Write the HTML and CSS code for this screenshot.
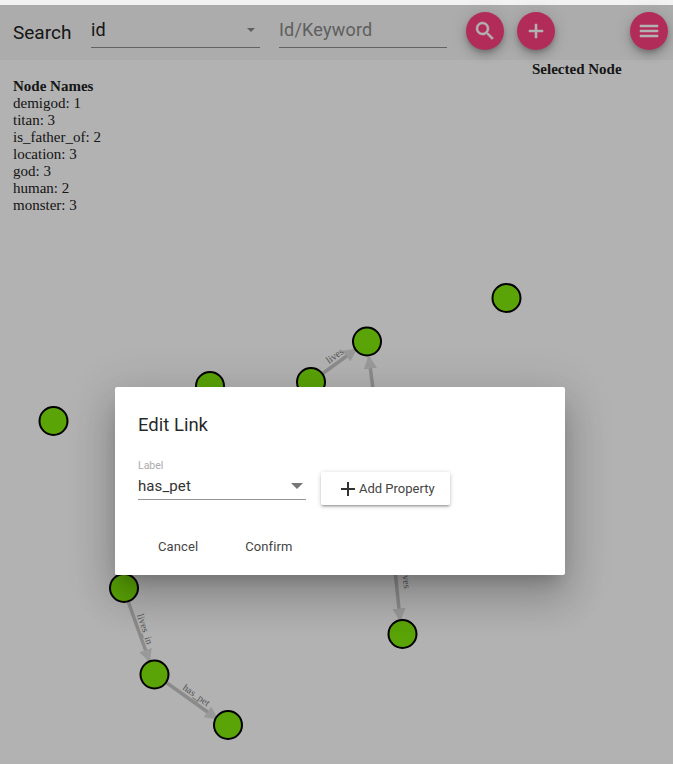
FILE: index.html
```html
<!DOCTYPE html>
<html lang="en">
<head>
<meta charset="utf-8">
<title>Graph</title>
<link rel="stylesheet" href="styles.css">
</head>
<body>
<div class="strip"></div>
<header class="toolbar">
  <span class="search-title">Search</span>
  <div class="field field-select"><span>id</span><i class="caret"></i></div>
  <div class="field field-input"><span>Id/Keyword</span></div>
  <button class="fab fab-search"><svg viewBox="0 0 24 24" width="24" height="24"><path d="M15.5 14h-.79l-.28-.27A6.47 6.47 0 0 0 16 9.5 6.5 6.5 0 1 0 9.5 16c1.61 0 3.09-.59 4.23-1.57l.27.28v.79l5 4.99L20.49 19l-4.99-5zm-6 0C7.01 14 5 11.99 5 9.5S7.01 5 9.5 5 14 7.01 14 9.5 11.99 14 9.5 14z"/></svg></button>
  <button class="fab fab-add"><svg viewBox="0 0 24 24" width="24" height="24"><path d="M19 13h-6v6h-2v-6H5v-2h6V5h2v6h6v2z"/></svg></button>
  <button class="fab fab-menu"><svg viewBox="0 0 24 24" width="24" height="24"><path d="M3 18h18v-2H3v2zm0-5h18v-2H3v2zm0-7v2h18V6H3z"/></svg></button>
</header>
<main class="content">
  <section class="names">
    <div class="names-title">Node Names</div>
    <div>demigod: 1</div>
    <div>titan: 3</div>
    <div>is_father_of: 2</div>
    <div>location: 3</div>
    <div>god: 3</div>
    <div>human: 2</div>
    <div>monster: 3</div>
  </section>
  <section class="selected">Selected Node</section>
</main>
<svg class="graph" width="673" height="764" viewBox="0 0 673 764">
  <defs>
    <marker id="arrow" viewBox="0 0 10 10" refX="8" refY="5" markerWidth="3.8" markerHeight="3.8" markerUnits="strokeWidth" orient="auto"><path class="arrow-head" d="M0 0L10 5L0 10z"/></marker>
  </defs>
  <g class="edges">
    <line x1="311" y1="382" x2="355" y2="350" marker-end="url(#arrow)"/>
    <line x1="377" y1="420" x2="369" y2="358" marker-end="url(#arrow)"/>
    <line x1="394" y1="560" x2="400" y2="619" marker-end="url(#arrow)"/>
    <line x1="128" y1="601" x2="149" y2="660" marker-end="url(#arrow)"/>
    <line x1="167" y1="683" x2="216" y2="718" marker-end="url(#arrow)"/>
  </g>
  <g class="labels">
    <text transform="translate(329 364) rotate(-36)">lives</text>
    <text transform="translate(371 407) rotate(-83)">lives</text>
    <text transform="translate(402 570) rotate(84)">lives</text>
    <text transform="translate(137 615) rotate(72)">lives_in</text>
    <text transform="translate(182 689) rotate(35)">has_pet</text>
  </g>
  <g class="nodes">
    <circle cx="506.500" cy="298" r="14"/>
    <circle cx="367" cy="341.500" r="14"/>
    <circle cx="311" cy="382" r="14"/>
    <circle cx="210" cy="386" r="14"/>
    <circle cx="53.500" cy="421" r="14"/>
    <circle cx="124" cy="588" r="14"/>
    <circle cx="154.500" cy="674.500" r="14"/>
    <circle cx="228" cy="725" r="14"/>
    <circle cx="402.500" cy="634" r="14"/>
  </g>
</svg>
<div class="overlay">
  <div class="dialog">
    <h2 class="dialog-title">Edit Link</h2>
    <div class="dialog-body">
      <div class="label-field">
        <div class="label-caption">Label</div>
        <div class="label-select"><span>has_pet</span><i class="caret caret-dark"></i></div>
      </div>
      <button class="add-prop"><svg viewBox="0 0 24 24" width="24" height="24"><path d="M19 13h-6v6h-2v-6H5v-2h6V5h2v6h6v2z"/></svg><span>Add Property</span></button>
    </div>
    <div class="dialog-actions">
      <button class="text-btn">Cancel</button>
      <button class="text-btn">Confirm</button>
    </div>
  </div>
</div>
</body>
</html>
```
FILE: styles.css
```css
* { box-sizing: border-box; }
html, body { margin: 0; padding: 0; }
body {
  width: 673px;
  height: 764px;
  overflow: hidden;
  background: #fff;
  position: relative;
  font-family: "Liberation Serif", serif;
  color: #222;
}
.strip { height: 5px; background: #f2f2f2; }
.toolbar {
  height: 55px;
  background: #f6f6f6;
  display: flex;
  align-items: flex-start;
  position: relative;
}
.search-title {
  font: 19px/22px Roboto, sans-serif;
  color: #222;
  margin: 17px 0 0 13px;
  width: 78px;
}
.field {
  border-bottom: 1px solid #8d8d8d;
  height: 43px;
  font: 18px/22px Roboto, sans-serif;
  padding-top: 14px;
  position: relative;
}
.field-select { width: 169px; color: #222; }
.field-input { width: 168px; margin-left: 19px; color: #888; letter-spacing: .2px; }
.caret {
  position: absolute;
  right: 5px;
  top: 23px;
  border-left: 4px solid transparent;
  border-right: 4px solid transparent;
  border-top: 4px solid #8a8a8a;
}
.fab {
  position: absolute;
  top: 7px;
  width: 38px;
  height: 38px;
  border: 0;
  padding: 0;
  border-radius: 50%;
  background: #ff4081;
  display: flex;
  align-items: center;
  justify-content: center;
  box-shadow: 0 3px 5px -1px rgba(0,0,0,.2), 0 6px 10px 0 rgba(0,0,0,.14), 0 1px 18px 0 rgba(0,0,0,.12);
}
.fab svg { fill: #fff; stroke: #fff; stroke-width: .5; }
.fab-search { left: 466px; }
.fab-add { left: 517px; }
.fab-menu { left: 630px; }
.content {
  display: flex;
  font-size: 15px;
  line-height: 17px;
}
.names { margin: 18px 0 0 13px; width: 519px; }
.names-title { font-weight: bold; }
.selected { font-weight: bold; margin-top: 1px; }
.graph { position: absolute; left: 0; top: 0; }
.edges line { stroke: #c8c8c8; stroke-width: 3.500; fill: none; }
.arrow-head { fill: #dcdcdc; }
.labels text { font: 10px "Liberation Serif", serif; fill: #777; }
.nodes circle { fill: #82eb0b; stroke: #000; stroke-width: 2; }
.overlay {
  position: absolute;
  left: 0;
  top: 5px;
  right: 0;
  bottom: 0;
  background: rgba(0,0,0,.3);
  padding: 382px 0 0 115px;
}
.dialog {
  width: 450px;
  height: 188px;
  background: #fff;
  box-shadow: 0 11px 15px -7px rgba(0,0,0,.2), 0 24px 38px 3px rgba(0,0,0,.14), 0 9px 46px 8px rgba(0,0,0,.12);
  padding: 0 23px;
  font-family: Roboto, sans-serif;
  border-radius: 2px;
}
.dialog-title {
  margin: 0;
  font: 400 18.500px/22px Roboto, sans-serif;
  color: rgba(0,0,0,.87);
  padding-top: 27px;
  height: 71px;
}
.dialog-body { display: flex; align-items: flex-start; }
.label-field { width: 168px; }
.label-caption { font-size: 10.500px; line-height: 12px; color: #aaa; margin: 2px 0; }
.label-select {
  position: relative;
  font-size: 15px;
  line-height: 20px;
  height: 26px;
  padding-top: 2px;
  border-bottom: 1px solid #949494;
  color: #333;
  letter-spacing: .1px;
}
.caret-dark {
  top: 9px;
  right: 3px;
  border-top: 6px solid #777;
  border-left-width: 6px;
  border-right-width: 6px;
}
.add-prop {
  margin: 14px 0 0 15px;
  width: 129px;
  height: 33px;
  background: #fff;
  border: 0;
  padding: 0 0 0 15px;
  border-radius: 2px;
  display: flex;
  align-items: center;
  font: 13px Roboto, sans-serif;
  color: #444;
  box-shadow: 0 1px 5px 0 rgba(0,0,0,.2), 0 2px 2px 0 rgba(0,0,0,.14), 0 3px 1px -2px rgba(0,0,0,.12);
}
.add-prop svg { fill: #333; flex: none; margin-right: -1px; }
.dialog-actions { display: flex; gap: 47px; padding: 32px 0 0 20px; }
.text-btn {
  background: none;
  border: 0;
  padding: 0;
  font: 13px/20px Roboto, sans-serif;
  letter-spacing: .1px;
  color: #444;
}
```
